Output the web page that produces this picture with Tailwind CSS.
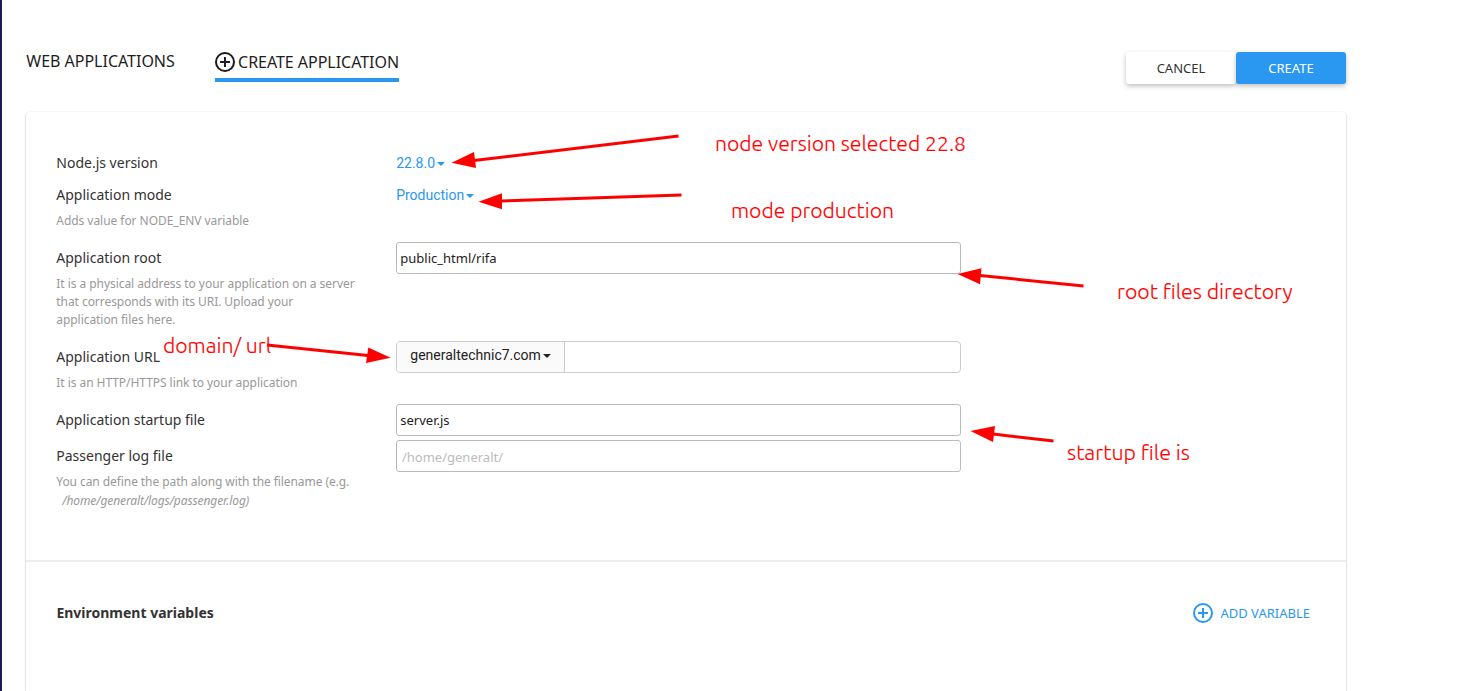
<!DOCTYPE html>
<html lang="en">
<head>
<meta charset="utf-8">
<title>Create application</title>
<script src="https://cdn.jsdelivr.net/npm/@tailwindcss/browser@4"></script>
</head>
<body class="relative h-[691px] overflow-hidden border-l-2 border-[#171b57] bg-white pl-6 font-['Noto_Sans','Open_Sans',sans-serif] text-sm text-[#333]">
  <header class="flex h-28 w-[1320px] items-start justify-between pt-[49px]">
    <nav class="flex text-base text-[#1d1d1d]">
      <a class="mr-10 leading-6"><svg class="h-6 w-[149px] overflow-visible" ><text x="0.3" y="18" textLength="148.500" fill="currentColor">WEB APPLICATIONS</text></svg></a>
      <a class="flex h-[33px] w-[184px] items-start border-b-4 border-[#2a98f0]">
        <svg class="mt-[3px] mr-[3px] h-5 w-5 shrink-0" viewBox="0 0 20 20" fill="none" stroke="currentColor" stroke-width="2"><circle cx="10" cy="10" r="9"/><path d="M10 5v10M5 10h10"/></svg>
        <svg class="h-6 w-[161px] overflow-visible"><text x="0.1" y="19" textLength="161" fill="currentColor">CREATE APPLICATION</text></svg>
      </a>
    </nav>
    <div class="mt-[3px] flex text-[13px]">
      <button class="h-8 w-[110px] rounded-[3px] bg-white shadow-[0_2px_5px_rgba(0,0,0,0.26)]">CANCEL</button>
      <button class="relative h-8 w-[110px] rounded-[3px] bg-[#2a98f0] text-white shadow-[0_2px_5px_rgba(0,0,0,0.26)]">CREATE</button>
    </div>
  </header>

  <main class="h-[579px] w-[1320px] rounded-t-sm shadow-[0_0_1px_rgba(0,0,0,0.12),0_1px_2px_rgba(0,0,0,0.32)]">
    <section class="h-[450px] border-b-2 border-[#eee] pr-[30px] pl-[30.3px] pt-[35px]">
      <div class="flex h-8">
        <div class="w-[339.7px] leading-8">Node.js version</div>
        <div class="flex items-center pl-[0.2px] font-[Roboto,sans-serif] text-[#2a98f0]">22.8.0<i class="mt-0.5 ml-[2px] border-x-4 border-t-4 border-x-transparent border-t-[#2a98f0]"></i></div>
      </div>
      <div class="flex h-[63px]">
        <div class="w-[339.7px] leading-8">Application mode<p class="mt-px text-xs leading-[18px] tracking-[-0.045px] text-[#999]">Adds value for NODE_ENV variable</p></div>
        <div class="flex h-8 items-center pl-[0.2px] font-[Roboto,sans-serif] text-[#2a98f0]">Production<i class="mt-0.5 ml-[1.8px] border-x-4 border-t-4 border-x-transparent border-t-[#2a98f0]"></i></div>
      </div>
      <div class="flex h-[99px]">
        <div class="w-[339.7px] leading-8">Application root<p class="mt-px text-xs leading-[18px] tracking-[-0.055px] text-[#999]">It is a physical address to your application on a server<br>that corresponds with its URI. Upload your<br>application files here.</p></div>
        <div class="h-8 w-[565px] rounded-[3px] border border-[#bbb] pl-[3.3px] text-[13px] leading-[31px] text-[#222]">public_html/rifa</div>
      </div>
      <div class="flex h-[63px]">
        <div class="w-[339.7px] leading-8">Application URL<p class="mt-px text-xs leading-[18px] tracking-[-0.055px] text-[#999]">It is an HTTP/HTTPS link to your application</p></div>
        <div class="flex h-8 w-[565px] overflow-hidden rounded border border-[#ccc]">
          <div class="flex w-[168px] items-center border-r border-[#ccc] bg-[#fafafa] pb-[5px] pl-[13.3px] font-[Roboto,sans-serif] text-[#222]">generaltechnic7.com<i class="mt-[3px] ml-[2px] border-x-4 border-t-4 border-x-transparent border-t-[#222]"></i></div>
        </div>
      </div>
      <div class="flex h-9">
        <div class="w-[339.7px] leading-8">Application startup file</div>
        <div class="h-8 w-[565px] rounded-[3px] border border-[#bbb] pl-[3.3px] text-[13px] leading-[31px] text-[#222]">server.js</div>
      </div>
      <div class="flex">
        <div class="w-[339.7px] leading-8">Passenger log file<p class="mt-px text-xs leading-[18px] tracking-[-0.075px] text-[#999]">You can define the path along with the filename (e.g.<br><em class="ml-1.5 leading-5 tracking-[-0.1px]">/home/generalt/logs/passenger.log)</em></p></div>
        <div class="h-8 w-[565px] rounded-[3px] border border-[#bbb] pl-[5px] text-[13px] leading-[33px] text-[#bbb]">/home/generalt/</div>
      </div>
    </section>
    <section class="flex items-center justify-between pt-[41px] pr-9 pl-[30.4px]">
      <h2 class="font-bold">Environment variables</h2>
      <button class="flex items-center gap-[7px] text-[13px] text-[#2a98f0]">
        <svg class="h-5 w-5" viewBox="0 0 20 20" fill="none" stroke="currentColor" stroke-width="2"><circle cx="10" cy="10" r="9"/><path d="M10 5v10M5 10h10"/></svg>
        ADD VARIABLE
      </button>
    </section>
  </main>

  <!-- Hand-placed callouts over the form -->
  <svg class="pointer-events-none absolute top-0 -left-0.5 h-[691px] w-[1458px] font-['Ubuntu','Noto_Sans',sans-serif] text-[20px] font-light" viewBox="0 0 1458 691" fill="#f00">
    <g stroke="#f00" stroke-width="3">
      <path d="M678.500 136L474 160.500"/><path d="M681.500 194.900L500 201"/><path d="M1083.500 286L980 275.500"/><path d="M267 345L368 355.500"/><path d="M1053.500 441L993 434"/>
    </g>
    <path d="M451.500 162.700L474 152L476 168z"/><path d="M478.500 201.800L502 193.300V209.300z"/><path d="M957.500 274L981.500 268.300L980 284.300z"/><path d="M390.500 357.700L368.300 347.500L366 363z"/><path d="M970.500 431L995 426L993 442z"/>
    <g stroke="#f00" stroke-width="0.12">
      <text x="715" y="151" textLength="251" lengthAdjust="spacingAndGlyphs">node version selected 22.8</text>
      <text x="731" y="218" textLength="163" lengthAdjust="spacingAndGlyphs">mode production</text>
      <text x="1117" y="299" textLength="175.500" lengthAdjust="spacingAndGlyphs">root files directory</text>
      <text x="163" y="353" textLength="108" lengthAdjust="spacingAndGlyphs">domain/ url</text>
      <text x="1067" y="460" textLength="123" lengthAdjust="spacingAndGlyphs">startup file is</text>
    </g>
  </svg>
</body>
</html>
